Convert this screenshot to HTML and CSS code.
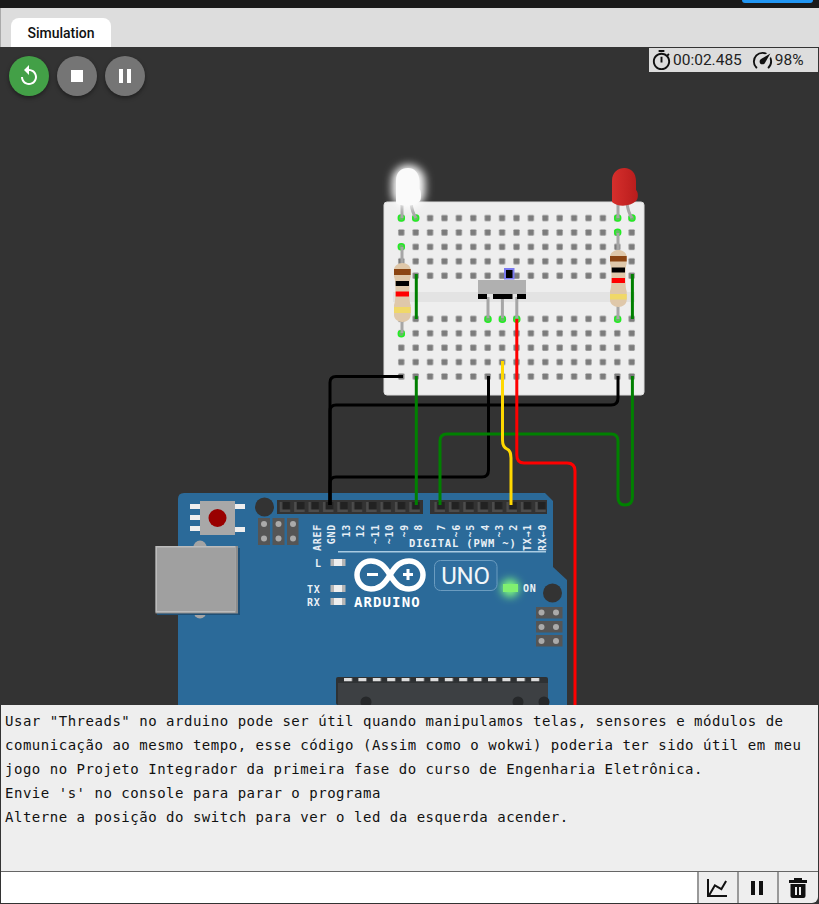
FILE: index.html
```html
<!DOCTYPE html>
<html lang="pt-BR">
<head>
    <meta charset="UTF-8">
    <meta name="viewport" content="width=device-width, initial-scale=1.0">
    <title>Simulation</title>
    <link rel="stylesheet" href="styles.css">
</head>
<body>
    <div class="top-bar"><div class="top-bar-button"></div></div>

    <div class="tabs">
        <div class="tab">Simulation</div>
    </div>

    <div class="canvas">
        <div class="controls">
            <button class="round-btn restart">
                <svg viewBox="0 0 24 24"><path d="M12 5V1L7 6l5 5V7c3.31 0 6 2.69 6 6s-2.69 6-6 6-6-2.69-6-6H4c0 4.42 3.58 8 8 8s8-3.58 8-8-3.58-8-8-8z"/></svg>
            </button>
            <button class="round-btn">
                <svg viewBox="0 0 24 24"><path d="M6 6h12v12H6z"/></svg>
            </button>
            <button class="round-btn">
                <svg viewBox="0 0 24 24"><path d="M6 19h4V5H6v14zm8-14v14h4V5h-4z"/></svg>
            </button>
        </div>

        <div class="status">
            <svg class="status-icon" viewBox="0 0 24 24"><path d="M15 1H9v2h6V1zm-4 13h2V8h-2v6zm8.03-6.61l1.42-1.42c-.43-.51-.9-.99-1.41-1.41l-1.42 1.42C16.07 4.74 14.12 4 12 4c-4.97 0-9 4.03-9 9s4.02 9 9 9 9-4.03 9-9c0-2.12-.74-4.07-1.97-5.61zM12 20c-3.87 0-7-3.13-7-7s3.13-7 7-7 7 3.13 7 7-3.13 7-7 7z"/></svg>
            <span class="status-time">00:02.485</span>
            <svg class="status-icon" viewBox="0 0 24 24"><path d="M12 16a3 3 0 0 1-3-3c0-1.12.61-2.1 1.5-2.61l9.71-5.62-5.53 9.58c-.5.98-1.51 1.65-2.68 1.65M12 3c1.81 0 3.5.5 4.97 1.32l-2.1 1.21C14 5.19 13 5 12 5a8 8 0 0 0-8 8c0 2.21.89 4.21 2.34 5.65h.01c.39.39.39 1.02 0 1.41-.39.39-1.03.39-1.42.01A9.969 9.969 0 0 1 2 13 10 10 0 0 1 12 3m10 10c0 2.76-1.12 5.26-2.93 7.07-.39.38-1.02.38-1.41-.01a.996.996 0 0 1 0-1.41A7.95 7.95 0 0 0 20 13c0-1-.19-2-.54-2.9L20.67 8C21.5 9.5 22 11.18 22 13z"/></svg>
            <span class="status-speed">98%</span>
        </div>

        <!-- viewBox starts at y=47 so the diagram uses page coordinates -->
        <svg class="diagram" viewBox="0 47 819 658">
            <defs>
                <pattern id="holes" patternUnits="userSpaceOnUse" x="394.1" y="210.8" width="14.4" height="14.4">
                    <rect x="4.2" y="4.2" width="6" height="6" rx="0.8" fill="#7c7c7c"/>
                </pattern>
                <pattern id="sockets" patternUnits="userSpaceOnUse" x="277.8" y="500" width="14.4" height="14">
                    <rect x="2" y="2" width="10.4" height="10" fill="#4d4d4d"/>
                    <path d="M4.5 2H12.4V9.5H4.5z" fill="#222"/>
                </pattern>
                <pattern id="sockets2" patternUnits="userSpaceOnUse" x="432.5" y="500" width="14.4" height="14">
                    <rect x="2" y="2" width="10.4" height="10" fill="#4d4d4d"/>
                    <path d="M4.5 2H12.4V9.5H4.5z" fill="#222"/>
                </pattern>
                <pattern id="chip-pins" patternUnits="userSpaceOnUse" x="344" y="678" width="14.4" height="6">
                    <rect x="0" y="0" width="8" height="3.5" fill="#ddd"/>
                </pattern>
                <linearGradient id="red-led" x1="0" y1="0" x2="1" y2="0">
                    <stop offset="0" stop-color="#d62f2c"/>
                    <stop offset="1" stop-color="#b81c1c"/>
                </linearGradient>
                <filter id="glow" x="-80%" y="-80%" width="260%" height="260%">
                    <feGaussianBlur stdDeviation="4"/>
                </filter>
            </defs>

            <!-- arduino -->
            <path class="board" d="M184 493H545L553 501V567L567 580V705H178V499Q178 493 184 493Z"/>
            <circle class="mount" cx="264.5" cy="507" r="9.5"/>
            <circle class="mount" cx="552.5" cy="593" r="9.5"/>

            <rect class="header" x="277" y="500" width="146" height="14"/>
            <rect x="277.8" y="500" width="144" height="14" fill="url(#sockets)"/>
            <rect class="header" x="430" y="500" width="117" height="14"/>
            <rect x="432.5" y="500" width="115" height="14" fill="url(#sockets2)"/>

            <g class="reset">
                <rect class="tab-pin" x="190" y="504" width="10" height="5"/>
                <rect class="tab-pin" x="190" y="515" width="10" height="5"/>
                <rect class="tab-pin" x="190" y="526" width="10" height="5"/>
                <rect class="tab-pin" x="235" y="504" width="10" height="5"/>
                <rect class="tab-pin" x="235" y="527" width="10" height="5"/>
                <rect x="200" y="501" width="35" height="34" fill="#a8a8a8"/>
                <circle cx="217.5" cy="518" r="9" fill="#990000"/>
            </g>

            <g class="icsp">
                <rect x="258" y="518" width="12" height="27"/>
                <rect x="272.5" y="518" width="12" height="27"/>
                <rect x="287" y="518" width="11.5" height="27"/>
                <rect x="536" y="607" width="26.5" height="11.5"/>
                <rect x="536" y="621" width="26.5" height="11.5"/>
                <rect x="536" y="635" width="26.5" height="11.5"/>
            </g>
            <g class="icsp-pin">
                <circle cx="264" cy="524" r="3"/><circle cx="264" cy="538.5" r="3"/>
                <circle cx="278.5" cy="524" r="3"/><circle cx="278.5" cy="538.5" r="3"/>
                <circle cx="293" cy="524" r="3"/><circle cx="293" cy="538.5" r="3"/>
                <circle cx="541.5" cy="612.5" r="3"/><circle cx="556" cy="612.5" r="3"/>
                <circle cx="541.5" cy="627" r="3"/><circle cx="556" cy="627" r="3"/>
                <circle cx="541.5" cy="641" r="3"/><circle cx="556" cy="641" r="3"/>
            </g>

            <!-- usb -->
            <circle cx="200" cy="547" r="6.5" fill="#a4a4a4"/>
            <circle cx="200" cy="612" r="6.5" fill="#a4a4a4"/>
            <rect x="157" y="548" width="83" height="67" fill="#1f4f75"/>
            <rect x="155.5" y="546" width="82.5" height="67.5" fill="#8c8c8c"/>
            <rect x="155.5" y="546" width="80" height="66.5" fill="#bcbcbc"/>
            <rect x="157" y="547.5" width="78" height="63.5" fill="#a0a0a0"/>

            <!-- silkscreen -->
            <g class="pin-label">
                <text transform="translate(321,524) rotate(-90)">AREF</text>
                <text transform="translate(335,524) rotate(-90)">GND</text>
                <text transform="translate(349.5,524) rotate(-90)">13</text>
                <text transform="translate(364,524) rotate(-90)">12</text>
                <text transform="translate(378.5,524) rotate(-90)">~11</text>
                <text transform="translate(393,524) rotate(-90)">~10</text>
                <text transform="translate(407.5,524) rotate(-90)">~9</text>
                <text transform="translate(422,524) rotate(-90)">8</text>
                <text transform="translate(445,524) rotate(-90)">7</text>
                <text transform="translate(459.5,524) rotate(-90)">~6</text>
                <text transform="translate(474,524) rotate(-90)">~5</text>
                <text transform="translate(488.5,524) rotate(-90)">4</text>
                <text transform="translate(503,524) rotate(-90)">~3</text>
                <text transform="translate(517,524) rotate(-90)">2</text>
                <text transform="translate(531,524) rotate(-90)">TX→1</text>
                <text transform="translate(545.5,524) rotate(-90)">RX←0</text>
            </g>
            <text class="silk digital" x="409" y="547">DIGITAL (PWM ~)</text>
            <rect x="338" y="551" width="208" height="1.5" fill="#a9cbe2"/>
            <text class="silk small" x="315" y="567">L</text>
            <text class="silk small" x="307" y="593">TX</text>
            <text class="silk small" x="307" y="606">RX</text>
            <text class="silk small" x="523" y="592">ON</text>

            <g class="smd">
                <rect x="330.5" y="559" width="15" height="7"/><rect x="334" y="559" width="8" height="7" class="smd-core"/>
                <rect x="330.5" y="585" width="15" height="7"/><rect x="334" y="585" width="8" height="7" class="smd-core"/>
                <rect x="330.5" y="598" width="15" height="7"/><rect x="334" y="598" width="8" height="7" class="smd-core"/>
            </g>
            <circle cx="510" cy="588" r="9" fill="#80ff80" filter="url(#glow)"/>
            <rect x="503" y="584" width="15" height="8" fill="#80f070"/>

            <!-- logo -->
            <path class="logo" d="M390 575C384 565 379 561 371 561A14 14 0 0 0 371 589C379 589 384 585 390 575C396 565 401 561 409 561A14 14 0 0 1 409 589C401 589 396 585 390 575Z"/>
            <path class="logo-mark" d="M367 573h11v3h-11zM403 573h3.5v-4h3v4h3.5v3h-3.5v4h-3v-4h-3.5z"/>
            <text class="silk logo-text" x="354" y="606.5">ARDUINO</text>
            <rect class="uno-box" x="434.5" y="560.5" width="62.5" height="30" rx="6"/>
            <text class="uno" x="465.5" y="584">UNO</text>

            <!-- chip -->
            <rect x="336" y="677" width="212" height="28" rx="2" fill="#2e3133"/>
            <rect x="344" y="678" width="200" height="3.5" fill="url(#chip-pins)"/>
            <rect x="338" y="683" width="210" height="22" fill="#3d4043"/>
            <circle cx="366" cy="702" r="5.5" fill="#26282a"/>
            <circle cx="518" cy="702" r="5.5" fill="#26282a"/>
            <circle cx="544" cy="702" r="5.5" fill="#26282a"/>

            <!-- breadboard -->
            <rect class="breadboard" x="384" y="202" width="260" height="193" rx="3"/>
            <rect x="393" y="292" width="242" height="10" fill="#e3e3e3"/>
            <rect x="394.1" y="210.8" width="245" height="72" fill="url(#holes)"/>
            <rect x="394.1" y="312" width="245" height="72" fill="url(#holes)"/>

            <!-- hole highlights -->
            <g class="lit">
                <circle cx="401.3" cy="218" r="3"/><circle cx="415.7" cy="218" r="3"/>
                <circle cx="401.3" cy="246.7" r="3"/><circle cx="401.3" cy="333.7" r="3"/>
                <circle cx="617.7" cy="218" r="3"/><circle cx="632" cy="218" r="3"/>
                <circle cx="617.7" cy="232.3" r="3"/><circle cx="617.7" cy="319.3" r="3"/>
                <circle cx="488" cy="319.3" r="3"/><circle cx="502.4" cy="319.3" r="3"/>
                <circle cx="516.8" cy="319.3" r="3"/>
            </g>

            <!-- switch -->
            <path class="lead" d="M488 297V318M502.4 297V318M516.8 297V318"/>
            <rect x="504" y="268" width="10.5" height="11.5" fill="#7a7af0"/>
            <rect x="506" y="270" width="6.5" height="8" fill="#000"/>
            <rect x="478" y="280" width="48" height="14" fill="#b0b0b0"/>
            <rect x="478" y="294" width="9" height="5" fill="#000"/>
            <rect x="493" y="294" width="19.5" height="5" fill="#000"/>
            <rect x="517" y="294" width="9" height="5" fill="#000"/>

            <!-- resistors -->
            <g class="resistor">
                <path class="lead" d="M402 247V333"/>
                <path class="res-body" d="M394 270C394 266 398 263 402.3 263C407 263 410.7 266 410.7 270V277C409 279 409 302 410.7 305V315C410.7 319 407 322 402.3 322C398 322 394 319 394 315V305C396 302 396 279 394 277Z"/>
                <rect x="394" y="269" width="16.7" height="6" fill="#8b4513"/>
                <rect x="395.7" y="281" width="13.3" height="5" fill="#000"/>
                <rect x="395.7" y="291.5" width="13.3" height="5" fill="#f00"/>
                <rect x="394" y="307" width="16.7" height="6" fill="#f0d868"/>
            </g>
            <g class="resistor">
                <path class="lead" d="M618 233V319"/>
                <path class="res-body" d="M610 257C610 253 614 250 618.3 250C623 250 626.7 253 626.7 257V264C625 266 625 288 626.7 291V300C626.7 304 623 307 618.3 307C614 307 610 304 610 300V291C612 288 612 266 610 264Z"/>
                <rect x="610" y="256" width="16.7" height="5.5" fill="#8b4513"/>
                <rect x="611.7" y="267.5" width="13.3" height="5" fill="#000"/>
                <rect x="611.7" y="278" width="13.3" height="5" fill="#f00"/>
                <rect x="610" y="294" width="16.7" height="5.5" fill="#f0d868"/>
            </g>

            <!-- leds -->
            <path class="lead" d="M402 203V218M411 203Q412 212 416 218"/>
            <path class="lead" d="M618 203V218M627 203Q628 212 632 218"/>
            <rect x="392" y="165" width="33" height="43" rx="16" fill="#fff" filter="url(#glow)"/>
            <path d="M396 181C396 172 401 168 408 168C414 168 419 172 419.5 181V189C421.5 191 421.5 199 420 201C414 207 401 207 396 203Z" fill="#fafafa"/>
            <path d="M612 181C612 172 618 168 624.5 168C631 168 636 173 636 181V190C638.5 192 638.5 199 636 201C630 207 617 207 612 202Z" fill="url(#red-led)"/>

            <!-- wires -->
            <g class="wire">
                <path class="w-green" d="M416.3 274V319"/>
                <path class="w-green" d="M632.4 274V319"/>
                <path class="w-black" d="M403 376.5H336Q330 376.5 330 382.5V505"/>
                <path class="w-black" d="M618 376V398Q618 405 611 405H336Q330 405 330 411V505"/>
                <path class="w-black" d="M488.5 376V470Q488.5 477 482 477H336Q330 477 330 483V505"/>
                <path class="w-green" d="M416.3 376V505"/>
                <path class="w-green" d="M632.4 376V497Q632.4 505 625 505Q618 505 618 497V441Q618 434 611 434H447Q440 434 440 441V505"/>
                <path class="w-yellow" d="M502.5 361V440Q502.5 447 507 449Q511 451 511 458V505"/>
                <path class="w-red" d="M516.8 319V455Q516.8 463 524 463H567Q575 463 575 471V705"/>
            </g>
        </svg>
    </div>

    <pre class="console-output">Usar "Threads" no arduino pode ser útil quando manipulamos telas, sensores e módulos de
comunicação ao mesmo tempo, esse código (Assim como o wokwi) poderia ter sido útil em meu
jogo no Projeto Integrador da primeira fase do curso de Engenharia Eletrônica.
Envie 's' no console para parar o programa
Alterne a posição do switch para ver o led da esquerda acender.</pre>

    <div class="console-bar">
        <input class="console-input" type="text">
        <button class="console-btn">
            <svg viewBox="0 0 24 24"><path d="M16 11.78L20.24 4.45L21.97 5.45L16.74 14.5L10.23 10.75L5.46 19H22V21H2V3H4V17.54L9.5 8L16 11.78Z"/></svg>
        </button>
        <button class="console-btn">
            <svg viewBox="0 0 24 24"><path d="M6 19h4V5H6v14zm8-14v14h4V5h-4z"/></svg>
        </button>
        <button class="console-btn">
            <svg viewBox="0 0 24 24"><path d="M8 2h8v2h5v3H3V4h5zM4.5 8h15v12a2 2 0 0 1-2 2h-11a2 2 0 0 1-2-2z"/><path d="M9 11h2v8H9zM13 11h2v8h-2z" fill="#eee"/></svg>
        </button>
    </div>
</body>
</html>
```

FILE: styles.css
```css
* {
    box-sizing: border-box;
}

body {
    margin: 0;
    height: 904px;
    overflow: hidden;
    display: flex;
    flex-direction: column;
    font-family: Roboto, "Liberation Sans", Arial, sans-serif;
    background-color: #333;
}

.top-bar {
    height: 8px;
    background-color: #1a1a1a;
    display: flex;
    justify-content: flex-end;
    padding-right: 6px;
}

.top-bar-button {
    width: 71px;
    height: 3px;
    background-color: #2196f3;
    border-radius: 0 0 4px 4px;
}

.tabs {
    height: 39px;
    background-color: #ddd;
    border-left: 1px solid #aaa;
    display: flex;
    align-items: flex-end;
    padding-left: 10px;
}

.tab {
    width: 100px;
    height: 29px;
    background-color: white;
    border-radius: 8px 8px 0 0;
    display: flex;
    align-items: center;
    justify-content: center;
    font-size: 14px;
    font-weight: 500;
    color: #111;
}

.canvas {
    position: relative;
    height: 658px;
    background-color: #333;
    overflow: hidden;
}

.diagram {
    display: block;
    width: 819px;
    height: 658px;
}

.controls {
    position: absolute;
    top: 9px;
    left: 9px;
    display: flex;
    gap: 8px;
    z-index: 1;
}

.round-btn {
    width: 40px;
    height: 40px;
    padding: 8px;
    border: none;
    border-radius: 50%;
    background-color: #757575;
    box-shadow: 0 2px 4px rgba(0, 0, 0, 0.4);
    display: flex;
    align-items: center;
    justify-content: center;
}

.round-btn.restart {
    background-color: #43a047;
}

.round-btn svg {
    width: 24px;
    height: 24px;
    fill: white;
}

.status {
    position: absolute;
    top: 1px;
    left: 649px;
    width: 169px;
    height: 24px;
    background-color: #ddd;
    display: flex;
    align-items: center;
    padding-left: 1px;
    font-size: 15.5px;
    color: #222;
    z-index: 1;
}

.status-icon {
    width: 23px;
    height: 23px;
    fill: #111;
    flex-shrink: 0;
}

.status-time {
    margin-right: 9px;
}

.status-speed {
    margin-left: 1px;
}

/* arduino */
.board {
    fill: #2b6a99;
}

.mount {
    fill: #333;
}

.header {
    fill: #333;
}

.tab-pin {
    fill: #eee;
}

.icsp {
    fill: #555;
}

.icsp-pin {
    fill: #aaa;
}

.pin-label text {
    font-family: "DejaVu Sans Mono", monospace;
    font-size: 10px;
    font-weight: bold;
    fill: #e6eef5;
    text-anchor: end;
    letter-spacing: 0.7px;
}

.silk {
    font-family: "DejaVu Sans Mono", monospace;
    font-weight: bold;
    fill: #eaf1f6;
}

.digital {
    font-size: 10.5px;
    letter-spacing: 0.85px;
}

.small {
    font-size: 10px;
    letter-spacing: 0.7px;
}

.smd rect {
    fill: #b5b5b5;
}

.smd .smd-core {
    fill: #eee;
}

.logo {
    fill: none;
    stroke: white;
    stroke-width: 5.5px;
}

.logo-mark {
    fill: white;
}

.logo-text {
    font-size: 14px;
    letter-spacing: 1.1px;
    fill: white;
}

.uno-box {
    fill: #2f6e9e;
    stroke: #6b9cc0;
    stroke-width: 1;
}

.uno {
    font-family: Roboto, sans-serif;
    font-size: 24px;
    letter-spacing: -0.2px;
    fill: #f2f6f9;
    text-anchor: middle;
}

/* breadboard */
.breadboard {
    fill: #eee;
    stroke: #ddd;
    stroke-width: 1;
}

.lit circle {
    fill: #66bb66;
    stroke: #22ee22;
    stroke-width: 1.5;
}

.lead {
    fill: none;
    stroke: #a6a6a6;
    stroke-width: 3;
}

.res-body {
    fill: #dfc8aa;
}

.wire path {
    fill: none;
    stroke-width: 3;
}

.w-black {
    stroke: #000;
}

.w-green {
    stroke: #008000;
}

.w-yellow {
    stroke: #ffd800;
}

.w-red {
    stroke: #f00;
}

/* console */
.console-output {
    height: 166px;
    margin: 0 1px;
    padding: 4px;
    background-color: #eee;
    font-family: "DejaVu Sans Mono", monospace;
    font-size: 14px;
    line-height: 24px;
    letter-spacing: 0.52px;
    color: #111;
}

.console-bar {
    height: 32px;
    margin: 0 1px;
    display: flex;
    border-top: 1px solid #666;
    border-bottom-right-radius: 6px;
    overflow: hidden;
}

.console-input {
    flex-grow: 1;
    min-width: 0;
    border: none;
    background-color: white;
    padding: 0 4px;
}

.console-btn {
    width: 40px;
    padding: 0 2px 0 0;
    border: none;
    border-left: 2px solid #999;
    background-color: #eee;
    display: flex;
    align-items: center;
    justify-content: center;
}

.console-btn:last-child {
    width: 41px;
}

.console-btn svg {
    width: 24px;
    height: 24px;
    fill: #111;
}
```
